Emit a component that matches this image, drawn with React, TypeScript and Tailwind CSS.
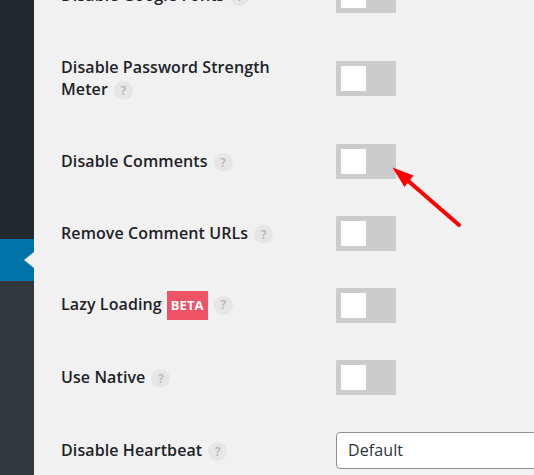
import React from "react";

const Help = () => (
  <span className="ml-[6px] inline-flex h-[19px] w-[19px] shrink-0 items-center justify-center rounded-full bg-[#e6e6e6] align-middle text-[12px] font-semibold leading-none text-[#b4b4b4]">
    ?
  </span>
);

const Toggle = () => (
  <div className="flex h-[35px] w-[60px] items-center bg-[#cccccc] pl-[5px]">
    <div className="h-[25px] w-[25px] bg-white" />
  </div>
);

type Row = { label: React.ReactNode; h: string; control?: React.ReactNode };

const rows: Row[] = [
  { label: <>Disable Google Fonts<Help /></>, h: "h-[72px]" },
  {
    label: (
      <>
        Disable Password Strength
        <br />
        Meter
        <Help />
      </>
    ),
    h: "h-[94px]",
  },
  { label: <>Disable Comments<Help /></>, h: "h-[72px]" },
  { label: <>Remove Comment URLs<Help /></>, h: "h-[72px]" },
  {
    label: (
      <>
        Lazy Loading
        <span className="ml-[5px] inline-flex h-[29px] w-[41px] items-center justify-center bg-[#ee5466] align-middle text-[13px] font-bold text-white">
          BETA
        </span>
        <Help />
      </>
    ),
    h: "h-[72px]",
  },
  { label: <>Use Native<Help /></>, h: "h-[72px]" },
  {
    label: <>Disable Heartbeat<Help /></>,
    h: "h-[74px]",
    control: (
      <div className="flex h-[37px] w-[220px] items-center rounded-[4px] border border-[#8c8f94] bg-white pl-[11px] text-[16px] font-normal text-[#2c3338]">
        Default
      </div>
    ),
  },
];

export default function App() {
  return (
    <div
      className="relative flex h-[475px] w-[534px] overflow-hidden bg-[#f1f1f1]"
      style={{ fontFamily: '"Open Sans", "Noto Sans", sans-serif' }}
    >
      <div className="flex w-[34px] shrink-0 flex-col">
        <div className="h-[239px] bg-[#23282d]" />
        <div className="relative h-[42px] bg-[#0073aa]">
          <div className="absolute right-0 top-[13px] h-0 w-0 border-y-[8px] border-r-[10px] border-y-transparent border-r-[#f1f1f1]" />
        </div>
        <div className="flex-1 bg-[#32373c]" />
      </div>

      <div className="flex-1">
        <div className="-mt-[41px] flex flex-col pl-[27px] tracking-[0.1px]">
          {rows.map((r, i) => (
            <div key={i} className={`flex items-center ${r.h}`}>
              <div className="w-[275px] shrink-0 text-[16px] font-semibold leading-[22px] text-[#1d2327]">
                {r.label}
              </div>
              {r.control ?? <Toggle />}
            </div>
          ))}
        </div>
      </div>

      {/* red annotation arrow */}
      <svg
        className="pointer-events-none absolute left-[385px] top-[160px]"
        width="85"
        height="75"
        viewBox="385 160 85 75"
      >
        <line x1="406" y1="179" x2="459" y2="225" stroke="#ff0000" strokeWidth="4" strokeLinecap="round" />
        <polygon points="392.5,167.5 413.5,175.5 404.5,187" fill="#ff0000" />
      </svg>
    </div>
  );
}
